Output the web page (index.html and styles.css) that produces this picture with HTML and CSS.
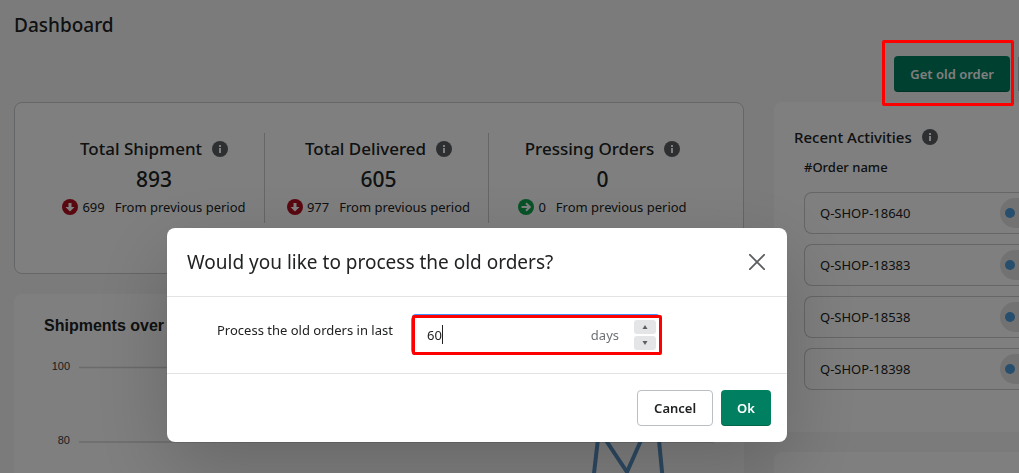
FILE: index.html
```html
<!DOCTYPE html>
<html lang="en">
<head>
<meta charset="utf-8">
<title>Dashboard</title>
<link rel="stylesheet" href="styles.css">
</head>
<body>
<svg class="defs" aria-hidden="true">
  <symbol id="info" viewBox="0 0 16 16"><circle cx="8" cy="8" r="8" fill="#5c5f62"/><path d="M7 4h2v2H7zM7 7h2v5H7z" fill="#fff"/></symbol>
  <symbol id="down" viewBox="0 0 16 16"><circle cx="8" cy="8" r="8" fill="#b4101f"/><path d="M6.500 4h3v4h3L8 12.500 3.500 8h3z" fill="#fff"/></symbol>
  <symbol id="right" viewBox="0 0 16 16"><circle cx="8" cy="8" r="8" fill="#12a650"/><path d="M3.500 8h8M8 4.200 11.800 8 8 11.800" fill="none" stroke="#fff" stroke-width="2"/></symbol>
</svg>
<div class="page">
  <header class="header">
    <h1 class="title">Dashboard</h1>
    <div class="toolbar">
      <button class="btn btn-primary" type="button">Get old order</button>
      <span class="toolbar-next"></span>
    </div>
  </header>
  <main class="grid">
    <div class="column">
      <section class="card metrics">
        <div class="metric">
          <h2 class="metric-name">Total Shipment <svg class="icon"><use href="#info"/></svg></h2>
          <p class="metric-value">893</p>
          <p class="metric-trend"><svg class="icon"><use href="#down"/></svg><span>699</span><span class="period">From previous period</span></p>
        </div>
        <div class="metric">
          <h2 class="metric-name">Total Delivered <svg class="icon"><use href="#info"/></svg></h2>
          <p class="metric-value">605</p>
          <p class="metric-trend"><svg class="icon"><use href="#down"/></svg><span>977</span><span class="period">From previous period</span></p>
        </div>
        <div class="metric">
          <h2 class="metric-name">Pressing Orders <svg class="icon"><use href="#info"/></svg></h2>
          <p class="metric-value">0</p>
          <p class="metric-trend"><svg class="icon"><use href="#right"/></svg><span>0</span><span class="period">From previous period</span></p>
        </div>
      </section>
      <section class="card chart">
        <h2 class="chart-title">Shipments over</h2>
        <svg class="plot" width="670" height="140" viewBox="0 0 670 140">
          <path d="M35 25.500H670M35 100H670" stroke="#d6d6d6" stroke-width="1.5"/>
          <path d="M549 140 555 88 583 130 606 78 614 88 619 140" fill="none" stroke="#5a92c4" stroke-width="4"/>
          <text class="tick" x="26" y="28" text-anchor="end">100</text>
          <text class="tick" x="26" y="102" text-anchor="end">80</text>
        </svg>
      </section>
    </div>
    <div class="column">
      <section class="card activities">
        <h2 class="activities-title">Recent Activities <svg class="icon"><use href="#info"/></svg></h2>
        <h3 class="activities-sub">#Order name</h3>
        <ul class="orders">
          <li class="order">Q-SHOP-18640<span class="badge"><i class="dot"></i></span></li>
          <li class="order">Q-SHOP-18383<span class="badge"><i class="dot"></i></span></li>
          <li class="order">Q-SHOP-18538<span class="badge"><i class="dot"></i></span></li>
          <li class="order">Q-SHOP-18398<span class="badge"><i class="dot"></i></span></li>
        </ul>
      </section>
      <section class="card card-next"></section>
    </div>
  </main>
</div>
<div class="backdrop"></div>
<div class="highlight highlight-button"></div>
<div class="modal" role="dialog" aria-labelledby="modal-title">
  <header class="modal-header">
    <h2 class="modal-title" id="modal-title">Would you like to process the old orders?</h2>
    <button class="close" type="button" aria-label="Close"><svg width="16" height="16" viewBox="0 0 16 16"><path d="M.7.7 15.300 15.300M15.300.7.7 15.300" stroke="#5c5f62" stroke-width="1.8" stroke-linecap="round"/></svg></button>
  </header>
  <div class="modal-body">
    <label class="label" for="days">Process the old orders in last</label>
    <div class="field">
      <input class="input" id="days" type="text" inputmode="numeric" value="60">
      <span class="suffix">days</span>
      <div class="spinner">
        <button class="step" type="button" aria-label="Increase"><svg width="6" height="4" viewBox="0 0 6 4"><path d="M.5 4 3 0 5.500 4z" fill="#5c5f62"/></svg></button>
        <button class="step" type="button" aria-label="Decrease"><svg width="6" height="4" viewBox="0 0 6 4"><path d="M.5 0 3 4 5.500 0z" fill="#5c5f62"/></svg></button>
      </div>
      <span class="caret"></span>
      <span class="highlight highlight-field"></span>
    </div>
  </div>
  <footer class="modal-footer">
    <button class="btn btn-plain" type="button">Cancel</button>
    <button class="btn btn-primary" type="button">Ok</button>
  </footer>
</div>
</body>
</html>
```
FILE: styles.css
```css
* { box-sizing: border-box; }
html, body { height: 100%; }
body {
  margin: 0;
  overflow: hidden;
  background: #f6f6f7;
  color: #202223;
  font: 400 13px/20px "Noto Sans", "Open Sans", sans-serif;
}
h1, h2, h3, p, ul { margin: 0; padding: 0; }
button, input { font: inherit; color: inherit; }
.defs { position: absolute; width: 0; height: 0; }
.icon { width: 16px; height: 16px; flex: none; }

.page { height: 100%; overflow: hidden; padding: 11px 0 0 14px; }
.title { font-size: 19px; line-height: 28px; font-weight: 500; }
.toolbar { display: flex; justify-content: flex-end; gap: 8px; margin-top: 17px; }
.toolbar-next { width: 1px; margin: 1px 0; background: #babfc3; }
.btn {
  height: 36px;
  padding: 0 16px;
  border: 0;
  border-radius: 4px;
  font-size: 13px;
  font-weight: 600;
  white-space: nowrap;
}
.btn-primary { background: #008060; color: #fff; box-shadow: inset 0 -1px 0 rgba(0, 0, 0, .2); }

.grid { display: grid; grid-template-columns: minmax(0, 730fr) minmax(0, 245fr); gap: 30px; margin-top: 10px; }
.column { display: flex; flex-direction: column; gap: 20px; }
.card { background: #fff; border-radius: 8px; }
.metrics {
  display: grid;
  grid-template-columns: repeat(3, 1fr);
  padding: 30px 31px 50px 25px;
  border: 1px solid #c9cccf;
}
.metric { height: 90px; padding: 4px 0 0 4px; text-align: center; }
.metric + .metric { border-left: 1px solid #c9cccf; }
.metric-name { display: flex; align-items: center; justify-content: center; gap: 10px; font-size: 17px; line-height: 24px; font-weight: 500; }
.metric-value { font-size: 21px; line-height: 36px; font-weight: 500; }
.metric-trend { display: flex; align-items: center; justify-content: center; gap: 4px; }
.period { margin-left: 6px; }

.chart { padding: 20px 30px; }
.chart-title { font: 700 16px/24px "Liberation Sans", Arial, sans-serif; }
.plot { display: block; margin-top: 4px; }
.tick { font: 11px "Liberation Sans", Arial, sans-serif; fill: #373d3f; }

.activities { padding: 25px 0 42px 20px; border-radius: 8px 0 0 8px; }
.activities-title { display: flex; align-items: center; gap: 10px; font-size: 15px; line-height: 20px; font-weight: 500; }
.activities-sub { margin: 10px 0 15px 10px; font-size: 13px; line-height: 20px; font-weight: 500; }
.orders { display: grid; gap: 10px; margin-left: 10px; list-style: none; }
.order {
  display: flex;
  align-items: center;
  justify-content: space-between;
  height: 42px;
  padding-left: 15px;
  border: 1px solid #c9cccf;
  border-right: 0;
  border-radius: 8px 0 0 8px;
}
.badge { display: flex; align-items: center; width: 19px; height: 30px; padding-left: 5px; border-radius: 15px 0 0 15px; background: #e4e5e7; }
.dot { width: 10px; height: 10px; border-radius: 5px; background: #4f9ddb; }
.card-next { height: 80px; border-radius: 8px 0 0 0; }

.backdrop { position: fixed; inset: 0; background: rgba(0, 0, 0, .5); }
.highlight { position: absolute; border: 3px solid #f00; border-radius: 2px; pointer-events: none; }
.highlight-button { top: 40px; right: 5px; width: 132px; height: 66px; }
.highlight-field { inset: -1px -2px -1px 0; }

.modal {
  position: fixed;
  top: 228px;
  left: 167px;
  width: 620px;
  border-radius: 8px;
  background: #fff;
  box-shadow: 0 26px 80px rgba(0, 0, 0, .2), 0 0 1px rgba(0, 0, 0, .2);
}
.modal-header { display: flex; align-items: center; justify-content: space-between; padding: 20px; border-bottom: 1px solid #e1e3e5; }
.modal-title { font-size: 19px; line-height: 28px; font-weight: 400; }
.close { display: flex; align-items: center; justify-content: center; width: 20px; height: 20px; padding: 0; border: 0; background: none; }
.modal-body { display: flex; padding: 19px 127px 19px 50px; border-bottom: 1px solid #e1e3e5; }
.label { flex: none; width: 195px; padding-top: 4px; }
.field {
  position: relative;
  display: flex;
  align-items: center;
  flex: 1;
  min-width: 0;
  height: 38px;
  border-radius: 4px;
  box-shadow: 0 0 0 1px #458fff, 0 -2px 0 #458fff;
}
.input { flex: 1; min-width: 0; height: 36px; padding: 0 0 0 15px; border: 0; outline: 0; background: none; }
.suffix { margin-right: 15px; color: #6d7175; }
.spinner { display: grid; gap: 2px; margin-right: 4px; }
.step { display: flex; align-items: center; justify-content: center; width: 22px; height: 14px; padding: 0; border: 0; border-radius: 3px; background: #e4e5e7; }
.caret { position: absolute; left: 30px; top: 9px; width: 1px; height: 19px; background: #202223; }
.modal-footer { display: flex; justify-content: flex-end; gap: 8px; padding: 16px; }
.btn-plain { border: 1px solid #babfc3; background: #fff; }
```
